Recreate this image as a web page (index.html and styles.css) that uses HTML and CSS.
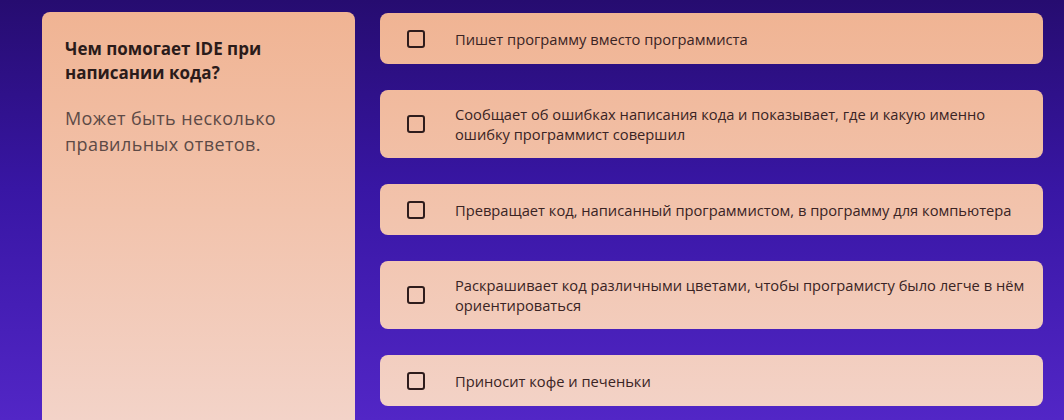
FILE: index.html
```html
<!DOCTYPE html>
<html lang="ru">
<head>
    <meta charset="UTF-8">
    <meta name="viewport" content="width=device-width, initial-scale=1.0">
    <title>Вопрос</title>
    <link rel="stylesheet" href="styles.css">
</head>
<body>
    <div class="quiz">
        <div class="question">
            <h2 class="question-title">Чем помогает IDE при написании кода?</h2>
            <p class="question-hint">Может быть несколько правильных ответов.</p>
        </div>
        <div class="answers">
            <label class="answer">
                <input type="checkbox">
                <span class="box"></span>
                <span class="answer-text">Пишет программу вместо программиста</span>
            </label>
            <label class="answer">
                <input type="checkbox">
                <span class="box"></span>
                <span class="answer-text">Сообщает об ошибках написания кода и показывает, где и какую именно ошибку программист совершил</span>
            </label>
            <label class="answer">
                <input type="checkbox">
                <span class="box"></span>
                <span class="answer-text">Превращает код, написанный программистом, в программу для компьютера</span>
            </label>
            <label class="answer">
                <input type="checkbox">
                <span class="box"></span>
                <span class="answer-text">Раскрашивает код различными цветами, чтобы програмисту было легче в нём ориентироваться</span>
            </label>
            <label class="answer">
                <input type="checkbox">
                <span class="box"></span>
                <span class="answer-text">Приносит кофе и печеньки</span>
            </label>
        </div>
    </div>
</body>
</html>
```

FILE: styles.css
```css
* {
    margin: 0;
    padding: 0;
    box-sizing: border-box;
}
html, body {
    height: 100%;
    overflow: hidden;
}
body {
    background: linear-gradient(180deg, #260c70 0%, #3816a4 45%, #5226c6 100%);
    font-family: 'Open Sans', 'Noto Sans', sans-serif;
    padding: 12px 21px 0 42px;
}
.quiz {
    display: flex;
    gap: 25px;
    height: 100%;
}
.question,
.answer {
    background: linear-gradient(180deg, #f0b392 0%, #f2c3ac 50%, #f3d3c8 100%) fixed;
    border-radius: 8px;
}
.question {
    width: 313px;
    padding: 25px 23px;
    border-radius: 8px 8px 0 0;
}
.question-title {
    font-size: 17px;
    font-weight: 700;
    line-height: 24px;
    color: #2b1b1a;
}
.question-hint {
    margin-top: 20px;
    font-size: 18px;
    letter-spacing: 0.4px;
    line-height: 26px;
    color: #5d4a46;
}
.answers {
    flex: 1;
    align-self: flex-start;
    display: flex;
    flex-direction: column;
    gap: 26px;
    padding-top: 1px;
}
.answer {
    display: flex;
    align-items: center;
    min-height: 51px;
    padding: 14px 13px 14px 27px;
    cursor: pointer;
}
.answer input {
    display: none;
}
.box {
    flex: none;
    width: 18px;
    height: 18px;
    border: 2px solid #2e1c1c;
    border-radius: 3px;
    margin-right: 30px;
}
.answer input:checked + .box {
    background: #2e1c1c;
}
.answer-text {
    font-size: 14.7px;
    line-height: 20px;
    color: #3a2424;
}
```
